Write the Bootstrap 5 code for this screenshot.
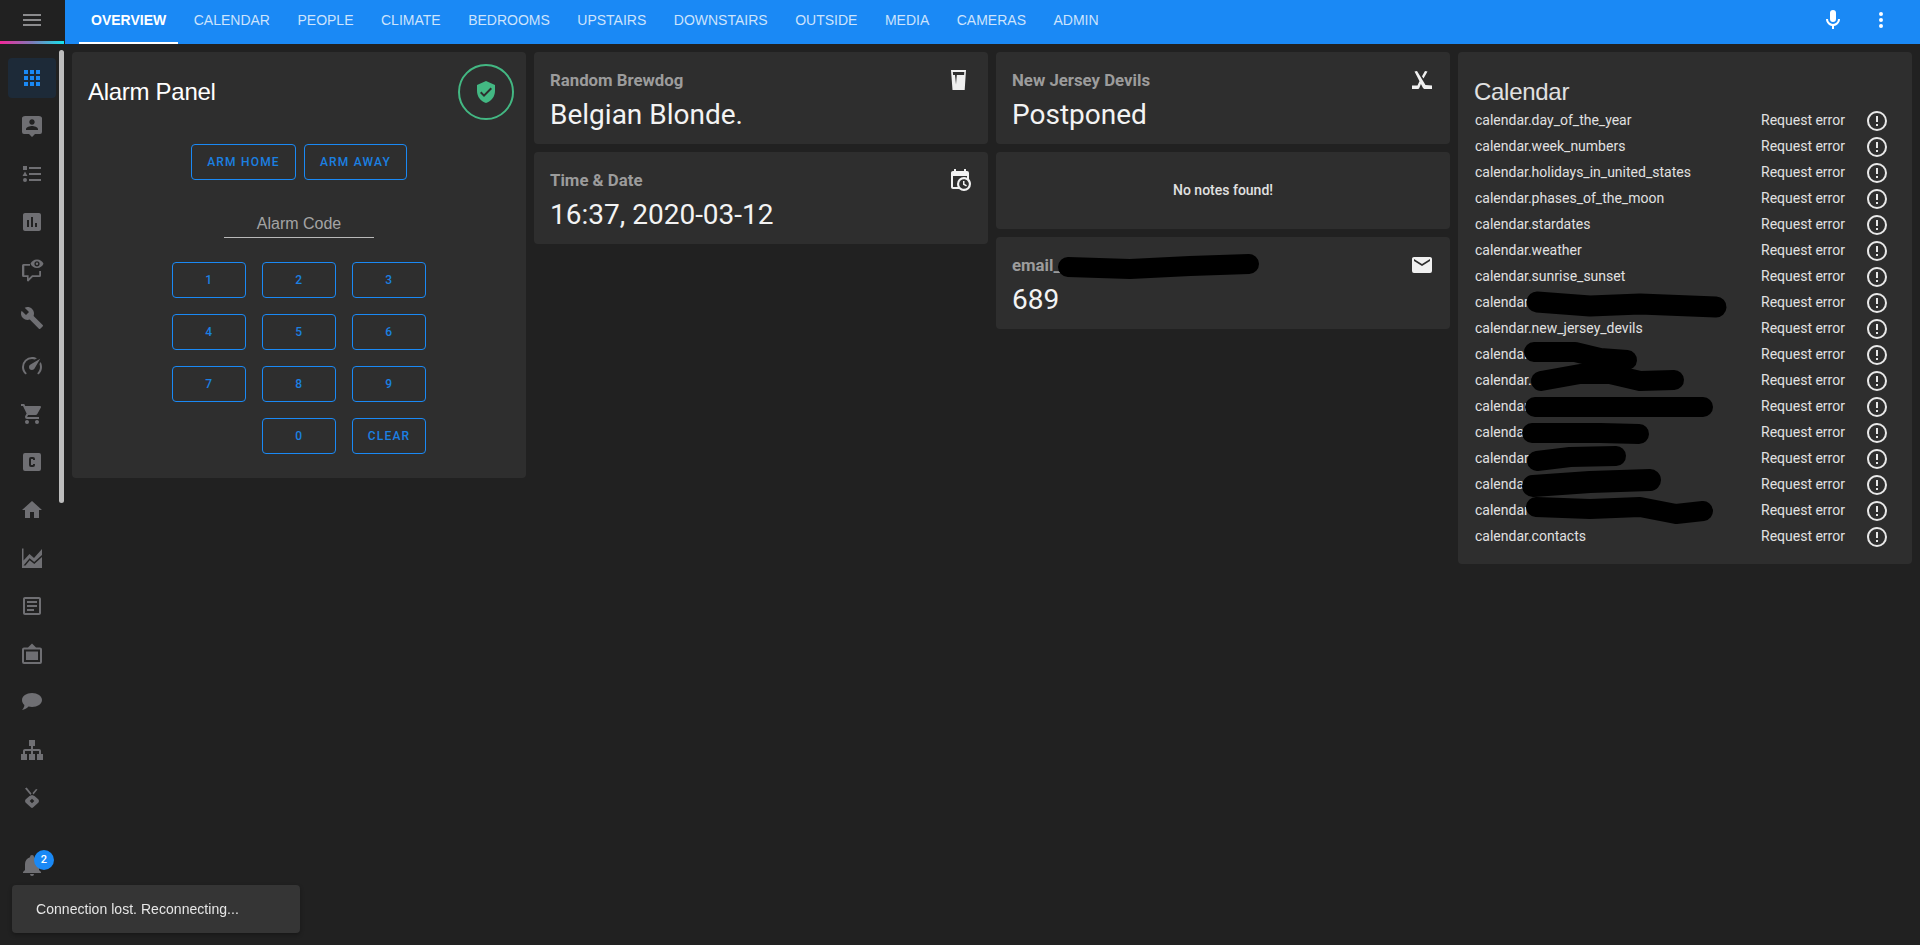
<!doctype html>
<html lang="en">
<head>
<meta charset="utf-8">
<title>Home Assistant</title>
<link href="https://cdn.jsdelivr.net/npm/bootstrap@5.3.0/dist/css/bootstrap.min.css" rel="stylesheet">
<style>
html,body{height:100%;}
body{background:#212121;color:#e1e1e1;font-family:Roboto,"Liberation Sans",sans-serif;overflow:hidden;}
.ha-side{width:65px;flex:none;position:relative;}
.ha-side-top{height:44px;position:relative;display:flex;align-items:center;justify-content:center;padding-right:1px;padding-bottom:4px;}
.ha-side-top svg{width:24px;height:24px;fill:#8b8b8d;}
.ha-rainbow{position:absolute;left:0;bottom:0;width:64px;height:3px;background:linear-gradient(90deg,#f3279a 0%,#7f7ab8 50%,#15e4ec 100%);}
.ha-side-nav{padding-top:10px;}
.ha-side-item{width:48px;height:48px;margin-left:8px;display:flex;align-items:center;justify-content:center;position:relative;}
.ha-side-item svg{width:24px;height:24px;fill:#6f6f73;fill-rule:evenodd;}
.ha-side-item.is-on::before{content:"";position:absolute;left:0;right:0;top:4px;bottom:4px;background:#1d2a38;border-radius:4px;}
.ha-side-item.is-on svg{fill:#1a89f5;position:relative;}
.ha-side-bell{margin-top:19px;}
.ha-bell-count{position:absolute;left:26px;top:9px;width:20px;height:20px;border-radius:50%;background:#1a89f5;color:#fff;font-size:11px;font-weight:500;line-height:20px;text-align:center;}
.ha-thumb{position:absolute;left:59px;top:50px;width:5px;height:453px;background:#bdbdbd;border-radius:3px;}
.ha-main{min-width:0;}
.ha-bar{height:44px;background:#1a89f5;padding:0 15px 0 14px;flex-wrap:nowrap;}
.ha-tabs{gap:3.5px;flex-wrap:nowrap;height:44px;}
.ha-tabs .nav-link{height:44px;padding:0 12px 3px;display:flex;align-items:center;border-bottom:2px solid transparent;color:rgba(255,255,255,.78);font:400 14px/1 "Liberation Sans",Arial,sans-serif;text-transform:uppercase;}
.ha-tabs .nav-link.active{color:#fff;font-weight:700;border-bottom-color:#fff;background:none;}
.ha-act{width:48px;height:44px;display:flex;align-items:center;justify-content:center;padding-bottom:4px;}
.ha-act svg{width:24px;height:24px;fill:#fff;}
.ha-board{display:grid;grid-template-columns:repeat(4,1fr);gap:8px;padding:8px 8px 0 7px;align-items:start;}
.ha-stack{display:flex;flex-direction:column;gap:8px;}
.ha-card{background:#2e2e2e;border:0;border-radius:4px;color:#e1e1e1;position:relative;}
.ha-head-title{font:400 24px/32px "Liberation Sans",Arial,sans-serif;letter-spacing:-.012em;}
.ha-alarm-head{padding:12px 12px 0 16px;}
.ha-alarm-head .ha-head-title{color:#fff;}
.ha-shield{width:56px;height:56px;border:2px solid #43b883;border-radius:50%;display:flex;align-items:center;justify-content:center;}
.ha-shield svg{width:24px;height:24px;fill:#43b883;fill-rule:evenodd;}
.ha-arm{margin-top:24px;gap:8px;}
.ha-btn{--bs-btn-color:#1b80e2;--bs-btn-border-color:#1a89f5;height:36px;padding:0;border-radius:4px;font:500 12px/34px Roboto,sans-serif;letter-spacing:.1em;text-transform:uppercase;}
.ha-arm .ha-btn:first-child{width:105px;}
.ha-arm .ha-btn:last-child{width:103px;}
.ha-code{width:150px;height:25px;margin:33px auto 0;border-bottom:1px solid #b9b9b9;text-align:center;font:400 16px/22px "Liberation Sans",Arial,sans-serif;color:#a4a4a4;}
.ha-keys{display:grid;grid-template-columns:repeat(3,74px);gap:16px;justify-content:center;margin:24px 0;}
.ha-keys .ha-btn{letter-spacing:.05em;}
.ha-keys .ha-btn-text{letter-spacing:.1em;}
.ha-slot{height:36px;}
.ha-sensor{height:92px;padding:16px 16px 8px;}
.ha-sensor-top{display:flex;justify-content:space-between;align-items:center;height:24px;}
.ha-sensor-name{font:700 16.8px/24px Roboto,sans-serif;color:#9c9c9c;}
.ha-sensor-top svg{width:24px;height:24px;fill:#f0f0f0;flex:none;}
.ha-sensor-val{font:400 28px/46px Roboto,sans-serif;color:#f3f3f3;}
.ha-notes{height:77px;padding-bottom:2px;display:flex;align-items:center;justify-content:center;font:500 14px/20px Roboto,sans-serif;color:#e1e1e1;}
.ha-cal{padding:24px 0 15px;}
.ha-cal-title{padding:0 16px 0;height:31px;color:#e1e1e1;}
.ha-row{height:26px;display:flex;align-items:center;padding:0 23px 0 17px;font:400 14px/20px Roboto,sans-serif;color:#e1e1e1;}
.ha-row-name{flex:1 1 auto;}
.ha-row-state{width:84px;margin-right:20px;white-space:nowrap;}
.ha-row svg{width:24px;height:24px;fill:#e8e8e8;flex:none;margin-top:2px;}
.ha-scribble{position:absolute;left:0;top:0;pointer-events:none;}
.ha-scribble path{fill:none;stroke:#000;stroke-linecap:round;stroke-linejoin:round;}
.ha-snack{position:fixed;left:12px;bottom:12px;width:288px;height:48px;padding-left:24px;display:flex;align-items:center;background:#353535;border-radius:4px;box-shadow:0 2px 4px rgba(0,0,0,.3);font:400 14px/20px "Liberation Sans",Arial,sans-serif;letter-spacing:.04px;color:#e6e6e6;}
</style>
</head>
<body>
<svg class="d-none" xmlns="http://www.w3.org/2000/svg">
  <symbol id="i-alert" viewBox="0 0 24 24"><path d="M11,15H13V17H11V15M11,7H13V13H11V7M12,2C6.47,2 2,6.47 2,12A10,10 0 0,0 12,22A10,10 0 0,0 22,12A10,10 0 0,0 12,2M12,20A8,8 0 0,1 4,12A8,8 0 0,1 12,4A8,8 0 0,1 20,12A8,8 0 0,1 12,20Z"/></symbol>
</svg>
<div class="d-flex">
  <aside class="ha-side">
    <div class="ha-side-top">
      <svg viewBox="0 0 24 24"><path d="M3,6H21V8H3V6M3,11H21V13H3V11M3,16H21V18H3V16Z"/></svg>
      <div class="ha-rainbow"></div>
    </div>
    <div class="ha-side-nav">
      <div class="ha-side-item is-on"><svg viewBox="0 0 24 24"><path d="M16,20H20V16H16M16,14H20V10H16M10,8H14V4H10M16,8H20V4H16M10,14H14V10H10M4,14H8V10H4M4,20H8V16H4M10,20H14V16H10M4,8H8V4H4V8Z"/></svg></div>
      <div class="ha-side-item"><svg viewBox="0 0 24 24"><path d="M18,16H6V15.1C6,13.1 10,12 12,12C14,12 18,13.1 18,15.1V16M12,5.3C13.5,5.3 14.7,6.5 14.7,8C14.7,9.5 13.5,10.7 12,10.7C10.5,10.7 9.3,9.5 9.3,8C9.3,6.5 10.5,5.3 12,5.3M19,2H5C3.89,2 2,2.89 2,4V18A2,2 0 0,0 4,20H9L12,23L15,20H20A2,2 0 0,0 22,18V4C22,2.89 20.1,2 19,2Z"/></svg></div>
      <div class="ha-side-item"><svg viewBox="0 0 24 24"><path d="M5,9.5L7.5,14H2.5L5,9.5M3,4H7V8H3V4M5,20A2,2 0 0,0 7,18A2,2 0 0,0 5,16A2,2 0 0,0 3,18A2,2 0 0,0 5,20M9,5V7H21V5H9M9,19H21V17H9V19M9,13H21V11H9V13Z"/></svg></div>
      <div class="ha-side-item"><svg viewBox="0 0 24 24"><path d="M5 3H19C20.1 3 21 3.9 21 5V19C21 20.1 20.1 21 19 21H5C3.9 21 3 20.1 3 19V5C3 3.9 3.9 3 5 3ZM7 10V17H9V10H7ZM11 7V17H13V7H11ZM15 13V17H17V13H15Z"/></svg></div>
      <div class="ha-side-item"><svg viewBox="0 0 24 24"><path d="M3.5 6H10V7.8H4.3V17.2H8.6V20.6L12 17.2H19.2V13H21V17.5A1.5 1.5 0 0 1 19.5 19H12.8L8.6 23.2C8 23.7 7 23.3 7 22.5V19H3.5A1.5 1.5 0 0 1 2 17.5V7.5A1.5 1.5 0 0 1 3.5 6ZM17 1.5C20 1.5 22.5 3.3 23.5 5.8C22.5 8.3 20 10 17 10C14 10 11.5 8.3 10.5 5.8C11.5 3.3 14 1.5 17 1.5ZM17 3.2A2.6 2.6 0 1 0 17 8.4A2.6 2.6 0 1 0 17 3.2ZM17 4.6A1.2 1.2 0 1 1 17 7A1.2 1.2 0 1 1 17 4.6Z"/></svg></div>
      <div class="ha-side-item"><svg viewBox="0 0 24 24"><path d="M22.7,19L13.6,9.9C14.5,7.6 14,4.9 12.1,3C10.1,1 7.1,0.6 4.7,1.7L9,6L6,9L1.6,4.7C0.4,7.1 0.9,10.1 2.9,12.1C4.8,14 7.5,14.5 9.8,13.6L18.9,22.7C19.3,23.1 19.9,23.1 20.3,22.7L22.6,20.4C23.1,20 23.1,19.3 22.7,19Z"/></svg></div>
      <div class="ha-side-item"><svg viewBox="0 0 24 24"><path d="M12,16A3,3 0 0,1 9,13C9,11.88 9.61,10.9 10.5,10.39L20.21,4.77L14.68,14.35C14.18,15.33 13.17,16 12,16M12,3C13.81,3 15.5,3.5 16.97,4.32L14.87,5.53C14,5.19 13,5 12,5A8,8 0 0,0 4,13C4,15.21 4.89,17.21 6.34,18.65H6.35C6.74,19.04 6.74,19.67 6.35,20.06C5.96,20.45 5.32,20.45 4.93,20.07V20.07C3.12,18.26 2,15.76 2,13A10,10 0 0,1 12,3M22,13C22,15.76 20.88,18.26 19.07,20.07V20.07C18.68,20.45 18.05,20.45 17.66,20.06C17.27,19.67 17.27,19.04 17.66,18.65V18.65C19.11,17.2 20,15.21 20,13C20,12 19.81,11 19.46,10.1L20.67,8C21.5,9.5 22,11.18 22,13Z"/></svg></div>
      <div class="ha-side-item"><svg viewBox="0 0 24 24"><path d="M17,18C15.89,18 15,18.89 15,20A2,2 0 0,0 17,22A2,2 0 0,0 19,20C19,18.89 18.1,18 17,18M1,2V4H3L6.6,11.59L5.24,14.04C5.09,14.32 5,14.65 5,15A2,2 0 0,0 7,17H19V15H7.42A0.25,0.25 0 0,1 7.17,14.75C7.17,14.7 7.18,14.66 7.2,14.63L8.1,13H15.55C16.3,13 16.96,12.58 17.3,11.97L20.88,5.5C20.95,5.34 21,5.17 21,5A1,1 0 0,0 20,4H5.21L4.27,2M7,18C5.89,18 5,18.89 5,20A2,2 0 0,0 7,22A2,2 0 0,0 9,20C9,18.89 8.1,18 7,18Z"/></svg></div>
      <div class="ha-side-item"><svg viewBox="0 0 24 24"><path d="M11,7A2,2 0 0,0 9,9V15A2,2 0 0,0 11,17H13A2,2 0 0,0 15,15V14H13V15H11V9H13V10H15V9A2,2 0 0,0 13,7H11M5,3H19A2,2 0 0,1 21,5V19A2,2 0 0,1 19,21H5A2,2 0 0,1 3,19V5A2,2 0 0,1 5,3Z"/></svg></div>
      <div class="ha-side-item"><svg viewBox="0 0 24 24"><path d="M10,20V14H14V20H19V12H22L12,3L2,12H5V20H10Z"/></svg></div>
      <div class="ha-side-item"><svg viewBox="0 0 24 24"><path d="M2 2.5H3.5V14.5L9.5 8L14 12L22 3V9L14.2 16L9.6 12.2L3.5 19.5H22V22H2ZM5.5 19.5L9.7 14.3L14.3 18L22 11V19.5Z"/></svg></div>
      <div class="ha-side-item"><svg viewBox="0 0 24 24"><path d="M5,3C3.89,3 3,3.89 3,5V19C3,20.11 3.89,21 5,21H19C20.11,21 21,20.11 21,19V5C21,3.89 20.11,3 19,3H5M5,5H19V19H5V5M7,7V9H17V7H7M7,11V13H17V11H7M7,15V17H14V15H7Z"/></svg></div>
      <div class="ha-side-item"><svg viewBox="0 0 24 24"><path d="M12 1.5L16 5.5H20A2 2 0 0 1 22 7.5V20A2 2 0 0 1 20 22H4A2 2 0 0 1 2 20V7.5A2 2 0 0 1 4 5.5H8ZM4 7.5V20H20V7.5ZM6 9.5H18V18H6Z"/></svg></div>
      <div class="ha-side-item"><svg viewBox="0 0 24 24"><path d="M12 3C17.5 3 22 6.1 22 10C22 13.9 17.5 17 12 17C10.8 17 9.6 16.85 8.5 16.6C7 18.2 4.5 20 2 20C3.2 18.8 4.3 16.9 4.4 15C2.9 13.7 2 11.9 2 10C2 6.1 6.5 3 12 3Z"/></svg></div>
      <div class="ha-side-item"><svg viewBox="0 0 24 24"><path d="M9,2V8H11V11H5C3.89,11 3,11.89 3,13V16H1V22H7V16H5V13H11V16H9V22H15V16H13V13H19V16H17V22H23V16H21V13C21,11.89 20.11,11 19,11H13V8H15V2H9Z"/></svg></div>
      <div class="ha-side-item"><svg viewBox="0 0 24 24"><path d="M5 2.5L6.7 1.5L11.5 7.5L10.5 9ZM17.5 3.5L16 3L12.5 7L13.5 8.5ZM12 9L14.5 10L18.5 13.5Q19.5 15 18.5 16.5L13 21.5Q12 22.3 11 21.5L5.5 16.5Q4.5 15 5.5 13.5L9.5 10ZM12 12.7L9.7 15L12 17.3L14.3 15Z"/></svg></div>
      <div class="ha-side-item ha-side-bell"><svg viewBox="0 0 24 24"><path d="M21,19V20H3V19L5,17V11C5,7.9 7.03,5.17 10,4.29C10,4.19 10,4.1 10,4A2,2 0 0,1 12,2A2,2 0 0,1 14,4C14,4.1 14,4.19 14,4.29C16.97,5.17 19,7.9 19,11V17L21,19M14,21A2,2 0 0,1 12,23A2,2 0 0,1 10,21"/></svg><span class="ha-bell-count">2</span></div>
    </div>
    <div class="ha-thumb"></div>
  </aside>

  <div class="ha-main flex-grow-1">
    <header class="navbar ha-bar">
      <ul class="nav ha-tabs">
        <li class="nav-item"><a class="nav-link active" href="#">Overview</a></li>
        <li class="nav-item"><a class="nav-link" href="#">Calendar</a></li>
        <li class="nav-item"><a class="nav-link" href="#">People</a></li>
        <li class="nav-item"><a class="nav-link" href="#">Climate</a></li>
        <li class="nav-item"><a class="nav-link" href="#">Bedrooms</a></li>
        <li class="nav-item"><a class="nav-link" href="#">Upstairs</a></li>
        <li class="nav-item"><a class="nav-link" href="#">Downstairs</a></li>
        <li class="nav-item"><a class="nav-link" href="#">Outside</a></li>
        <li class="nav-item"><a class="nav-link" href="#">Media</a></li>
        <li class="nav-item"><a class="nav-link" href="#">Cameras</a></li>
        <li class="nav-item"><a class="nav-link" href="#">Admin</a></li>
      </ul>
      <div class="d-flex">
        <div class="ha-act"><svg viewBox="0 0 24 24"><path d="M12,2A3,3 0 0,1 15,5V11A3,3 0 0,1 12,14A3,3 0 0,1 9,11V5A3,3 0 0,1 12,2M19,11C19,14.53 16.39,17.44 13,17.93V21H11V17.93C7.61,17.44 5,14.53 5,11H7A5,5 0 0,0 12,16A5,5 0 0,0 17,11H19Z"/></svg></div>
        <div class="ha-act"><svg viewBox="0 0 24 24"><path d="M12,16A2,2 0 0,1 14,18A2,2 0 0,1 12,20A2,2 0 0,1 10,18A2,2 0 0,1 12,16M12,10A2,2 0 0,1 14,12A2,2 0 0,1 12,14A2,2 0 0,1 10,12A2,2 0 0,1 12,10M12,4A2,2 0 0,1 14,6A2,2 0 0,1 12,8A2,2 0 0,1 10,6A2,2 0 0,1 12,4Z"/></svg></div>
      </div>
    </header>

    <main class="ha-board">
      <div class="card ha-card">
        <div class="d-flex justify-content-between align-items-center ha-alarm-head">
          <div class="ha-head-title">Alarm Panel</div>
          <div class="ha-shield"><svg viewBox="0 0 24 24"><path d="M12,1L3,5V11C3,16.55 6.84,21.74 12,23C17.16,21.74 21,16.55 21,11V5L12,1ZM10,17L6,13L7.41,11.59L10,14.17L16.59,7.58L18,9L10,17Z"/></svg></div>
        </div>
        <div class="d-flex justify-content-center ha-arm">
          <button type="button" class="btn btn-outline-primary ha-btn">Arm Home</button>
          <button type="button" class="btn btn-outline-primary ha-btn">Arm Away</button>
        </div>
        <div class="ha-code">Alarm Code</div>
        <div class="ha-keys">
          <button type="button" class="btn btn-outline-primary ha-btn">1</button>
          <button type="button" class="btn btn-outline-primary ha-btn">2</button>
          <button type="button" class="btn btn-outline-primary ha-btn">3</button>
          <button type="button" class="btn btn-outline-primary ha-btn">4</button>
          <button type="button" class="btn btn-outline-primary ha-btn">5</button>
          <button type="button" class="btn btn-outline-primary ha-btn">6</button>
          <button type="button" class="btn btn-outline-primary ha-btn">7</button>
          <button type="button" class="btn btn-outline-primary ha-btn">8</button>
          <button type="button" class="btn btn-outline-primary ha-btn">9</button>
          <div class="ha-slot"></div>
          <button type="button" class="btn btn-outline-primary ha-btn">0</button>
          <button type="button" class="btn btn-outline-primary ha-btn ha-btn-text">Clear</button>
        </div>
      </div>

      <div class="ha-stack">
        <div class="card ha-card ha-sensor">
          <div class="ha-sensor-top">
            <div class="ha-sensor-name">Random Brewdog</div>
            <svg viewBox="0 0 24 24"><path fill-rule="evenodd" d="M3 2H18L16.7 22H4.5ZM4.8 4L5.1 7H7L8 16.5L8.8 7H16.1L16.3 4Z"/></svg>
          </div>
          <div class="ha-sensor-val">Belgian Blonde.</div>
        </div>
        <div class="card ha-card ha-sensor">
          <div class="ha-sensor-top">
            <div class="ha-sensor-name">Time &amp; Date</div>
            <svg viewBox="0 0 24 24"><path d="M15,13H16.5V15.82L18.94,17.23L18.19,18.53L15,16.69V13M19,8H5V19H9.67C9.24,18.09 9,17.07 9,16A7,7 0 0,1 16,9C17.07,9 18.09,9.24 19,9.67V8M5,21C3.89,21 3,20.1 3,19V5C3,3.89 3.89,3 5,3H6V1H8V3H16V1H18V3H19A2,2 0 0,1 21,5V11.1C22.24,12.36 23,14.09 23,16A7,7 0 0,1 16,23C14.09,23 12.36,22.24 11.1,21H5M16,11.15A4.85,4.85 0 0,0 11.15,16C11.15,18.68 13.32,20.85 16,20.85A4.85,4.85 0 0,0 20.85,16C20.85,13.32 18.68,11.15 16,11.15Z"/></svg>
          </div>
          <div class="ha-sensor-val">16:37, 2020-03-12</div>
        </div>
      </div>

      <div class="ha-stack">
        <div class="card ha-card ha-sensor">
          <div class="ha-sensor-top">
            <div class="ha-sensor-name">New Jersey Devils</div>
            <svg viewBox="0 0 24 24"><path d="M4.5 3.5L7 3L15.5 17L22 17.5V21H15C14 21 13.5 20.5 13 20ZM15 3L17.5 3.5L13.5 10.5L12 8.3ZM10 12L11.5 14.5L9.3 20C9 20.6 8.5 21 7.5 21H2V17.5H7.5Z"/></svg>
          </div>
          <div class="ha-sensor-val">Postponed</div>
        </div>
        <div class="card ha-card ha-notes">No notes found!</div>
        <div class="card ha-card ha-sensor">
          <div class="ha-sensor-top">
            <div class="ha-sensor-name">email_</div>
            <svg viewBox="0 0 24 24"><path d="M20,8L12,13L4,8V6L12,11L20,6M20,4H4C2.89,4 2,4.89 2,6V18A2,2 0 0,0 4,20H20A2,2 0 0,0 22,18V6C22,4.89 21.1,4 20,4Z"/></svg>
          </div>
          <div class="ha-sensor-val">689</div>
          <svg class="ha-scribble" width="454" height="92" viewBox="996 237 454 92"><path stroke-width="20" d="M1068 267L1130 269L1190 266L1249 264"/></svg>
        </div>
      </div>

      <div class="card ha-card ha-cal">
        <div class="ha-head-title ha-cal-title">Calendar</div>
        <div class="ha-row"><span class="ha-row-name">calendar.day_of_the_year</span><span class="ha-row-state">Request error</span><svg><use href="#i-alert"/></svg></div>
        <div class="ha-row"><span class="ha-row-name">calendar.week_numbers</span><span class="ha-row-state">Request error</span><svg><use href="#i-alert"/></svg></div>
        <div class="ha-row"><span class="ha-row-name">calendar.holidays_in_united_states</span><span class="ha-row-state">Request error</span><svg><use href="#i-alert"/></svg></div>
        <div class="ha-row"><span class="ha-row-name">calendar.phases_of_the_moon</span><span class="ha-row-state">Request error</span><svg><use href="#i-alert"/></svg></div>
        <div class="ha-row"><span class="ha-row-name">calendar.stardates</span><span class="ha-row-state">Request error</span><svg><use href="#i-alert"/></svg></div>
        <div class="ha-row"><span class="ha-row-name">calendar.weather</span><span class="ha-row-state">Request error</span><svg><use href="#i-alert"/></svg></div>
        <div class="ha-row"><span class="ha-row-name">calendar.sunrise_sunset</span><span class="ha-row-state">Request error</span><svg><use href="#i-alert"/></svg></div>
        <div class="ha-row"><span class="ha-row-name">calendar</span><span class="ha-row-state">Request error</span><svg><use href="#i-alert"/></svg></div>
        <div class="ha-row"><span class="ha-row-name">calendar.new_jersey_devils</span><span class="ha-row-state">Request error</span><svg><use href="#i-alert"/></svg></div>
        <div class="ha-row"><span class="ha-row-name">calendar</span><span class="ha-row-state">Request error</span><svg><use href="#i-alert"/></svg></div>
        <div class="ha-row"><span class="ha-row-name">calendar.</span><span class="ha-row-state">Request error</span><svg><use href="#i-alert"/></svg></div>
        <div class="ha-row"><span class="ha-row-name">calendar</span><span class="ha-row-state">Request error</span><svg><use href="#i-alert"/></svg></div>
        <div class="ha-row"><span class="ha-row-name">calendar</span><span class="ha-row-state">Request error</span><svg><use href="#i-alert"/></svg></div>
        <div class="ha-row"><span class="ha-row-name">calendar</span><span class="ha-row-state">Request error</span><svg><use href="#i-alert"/></svg></div>
        <div class="ha-row"><span class="ha-row-name">calendar</span><span class="ha-row-state">Request error</span><svg><use href="#i-alert"/></svg></div>
        <div class="ha-row"><span class="ha-row-name">calendar</span><span class="ha-row-state">Request error</span><svg><use href="#i-alert"/></svg></div>
        <div class="ha-row"><span class="ha-row-name">calendar.contacts</span><span class="ha-row-state">Request error</span><svg><use href="#i-alert"/></svg></div>
        <svg class="ha-scribble" width="454" height="512" viewBox="1458 52 454 512">
          <path stroke-width="21" d="M1537 302L1590 306L1640 304L1716 307"/>
          <path stroke-width="20" d="M1534 352L1575 352L1600 358L1627 360"/>
          <path stroke-width="20" d="M1541 381L1580 374L1610 374L1640 381L1674 380"/>
          <path stroke-width="20" d="M1535 407L1703 407"/>
          <path stroke-width="20" d="M1532 433L1600 433L1639 434"/>
          <path stroke-width="20" d="M1537 461L1570 457L1616 456"/>
          <path stroke-width="22" d="M1533 486L1590 482L1650 480"/>
          <path stroke-width="20" d="M1536 507L1590 509L1640 507L1676 514L1703 511"/>
        </svg>
      </div>
    </main>
  </div>
</div>
<div class="ha-snack">Connection lost. Reconnecting...</div>
<script src="https://cdn.jsdelivr.net/npm/bootstrap@5.3.0/dist/js/bootstrap.bundle.min.js"></script>
</body>
</html>
